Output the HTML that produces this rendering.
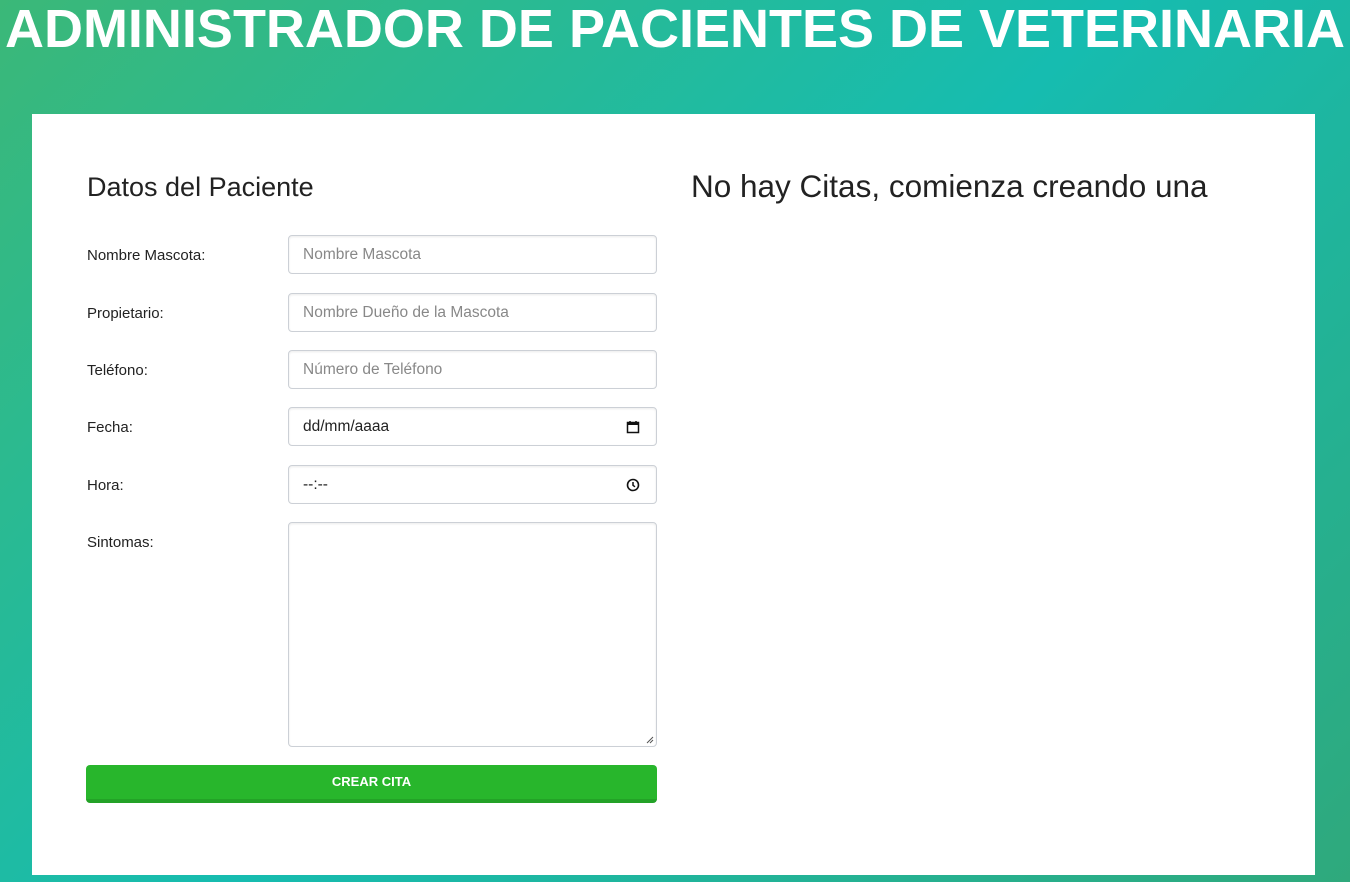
<!DOCTYPE html>
<html><head><meta charset="utf-8">
<style>
*{box-sizing:border-box;margin:0;padding:0}
html,body{width:1350px;height:882px;overflow:hidden}
body{font-family:"Liberation Sans",Arial,sans-serif;background:linear-gradient(135deg,#3bb878 0%,#16bcb0 50%,#2fa97c 100%);position:relative}
h1{position:absolute;left:0;width:1350px;top:-1px;text-align:center;color:#fff;font-size:54px;letter-spacing:0;font-weight:bold;line-height:60px;white-space:nowrap}
.card{position:absolute;left:32px;top:114px;width:1283px;height:761px;background:#fff}
h2{position:absolute;font-weight:normal;color:#222;font-size:27px;line-height:30px}
label{position:absolute;left:55px;font-size:15px;color:#222}
.in{position:absolute;left:256px;width:369px;height:39px;border:1px solid #ccd0d6;border-radius:4px;box-shadow:inset 0 1px 2px rgba(0,0,0,.08);font-size:15.5px;color:#888;padding:0 14px;line-height:37px}
.in.dark{color:#222}
.ic{position:absolute;right:16px;top:12px}
.btn{position:absolute;left:54px;top:651px;width:571px;height:38px;background:#28b62c;border-bottom:4px solid #23a227;border-radius:4px;color:#fff;font-weight:bold;font-size:13px;text-align:center;line-height:33px}
</style></head><body>
<h1>ADMINISTRADOR DE PACIENTES DE VETERINARIA</h1>
<div class="card">
<h2 style="left:55px;top:58px">Datos del Paciente</h2>
<h2 style="left:659px;top:57px;font-size:31.5px">No hay Citas, comienza creando una</h2>
<label style="top:133px">Nombre Mascota:</label>
<div class="in" style="top:121px">Nombre Mascota</div>
<label style="top:191px">Propietario:</label>
<div class="in" style="top:179px">Nombre Dueño de la Mascota</div>
<label style="top:248px">Teléfono:</label>
<div class="in" style="top:236px">Número de Teléfono</div>
<label style="top:305px">Fecha:</label>
<div class="in dark" style="top:293px">dd/mm/aaaa<svg class="ic" width="14" height="14" viewBox="0 0 14 14"><rect x="1.5" y="2.5" width="11" height="10" fill="none" stroke="#111" stroke-width="1.5"/><rect x="1.5" y="2.5" width="11" height="2.5" fill="#111"/><line x1="4" y1="1" x2="4" y2="3" stroke="#111" stroke-width="1.5"/><line x1="10" y1="1" x2="10" y2="3" stroke="#111" stroke-width="1.5"/></svg></div>
<label style="top:363px">Hora:</label>
<div class="in dark" style="top:351px">--:--<svg class="ic" width="14" height="14" viewBox="0 0 14 14"><circle cx="7" cy="7" r="5.5" fill="none" stroke="#111" stroke-width="1.6"/><path d="M7 4v3.3l2 1.5" fill="none" stroke="#111" stroke-width="1.5"/></svg></div>
<label style="top:420px">Sintomas:</label>
<div class="in" style="top:408px;height:225px"><svg style="position:absolute;right:2px;bottom:2px" width="8" height="8" viewBox="0 0 8 8"><path d="M7 1L1 7M7 4L4 7" stroke="#555" stroke-width="1"/></svg></div>
<div class="btn">CREAR CITA</div>
</div>
</body></html>
